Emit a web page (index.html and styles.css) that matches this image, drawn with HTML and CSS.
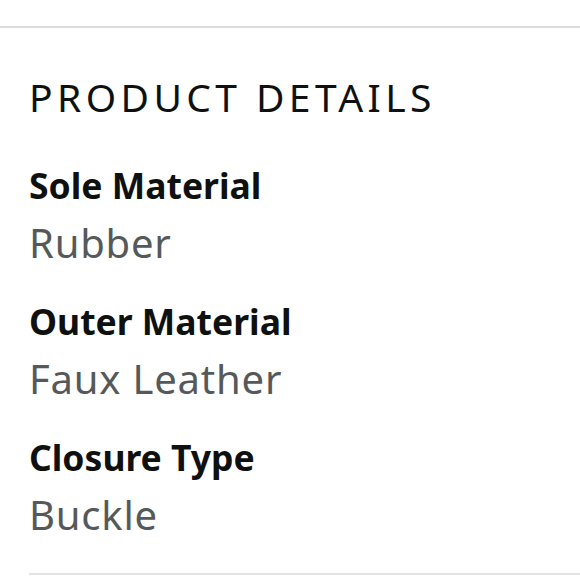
FILE: index.html
```html
<!DOCTYPE html>
<html lang="en">
<head>
<meta charset="utf-8">
<title>Product Details</title>
<link rel="stylesheet" href="styles.css">
</head>
<body>
<div class="page">
  <hr class="rule-top">
  <section class="details">
    <h2 class="title">PRODUCT DETAILS</h2>
    <dl class="list">
      <div class="item">
        <dt class="label">Sole Material</dt>
        <dd class="value">Rubber</dd>
      </div>
      <div class="item">
        <dt class="label">Outer Material</dt>
        <dd class="value">Faux Leather</dd>
      </div>
      <div class="item">
        <dt class="label">Closure Type</dt>
        <dd class="value">Buckle</dd>
      </div>
    </dl>
    <hr class="rule-bottom">
  </section>
</div>
</body>
</html>
```

FILE: styles.css
```css
html, body {
  margin: 0;
  padding: 0;
  background: #ffffff;
}
body {
  font-family: "Noto Sans", "Open Sans", sans-serif;
  color: #0f1111;
  overflow: hidden;
}
.page {
  width: 580px;
  height: 580px;
  padding-top: 26px;
  box-sizing: border-box;
}
.rule-top {
  margin: 0;
  border: 0;
  height: 2px;
  background: #dcdcdc;
}
.details {
  padding-left: 29px;
  padding-top: 40px;
}
.title {
  margin: 0;
  font-size: 39px;
  line-height: 57px;
  font-weight: 400;
  letter-spacing: 4.4px;
  color: #0f1111;
}
.list {
  margin: 32px 0 0 0;
  display: flex;
  flex-direction: column;
  gap: 22px;
}
.item {
  display: flex;
  flex-direction: column;
}
.label {
  margin: 0;
  font-size: 35.5px;
  line-height: 57px;
  font-weight: 700;
  color: #0f1111;
}
.value {
  margin: 0;
  font-size: 40px;
  line-height: 57px;
  font-weight: 400;
  letter-spacing: 0.8px;
  color: #565959;
}
.rule-bottom {
  margin: 30px 0 0 0;
  border: 0;
  height: 2px;
  background: #e3e3e3;
}
```
